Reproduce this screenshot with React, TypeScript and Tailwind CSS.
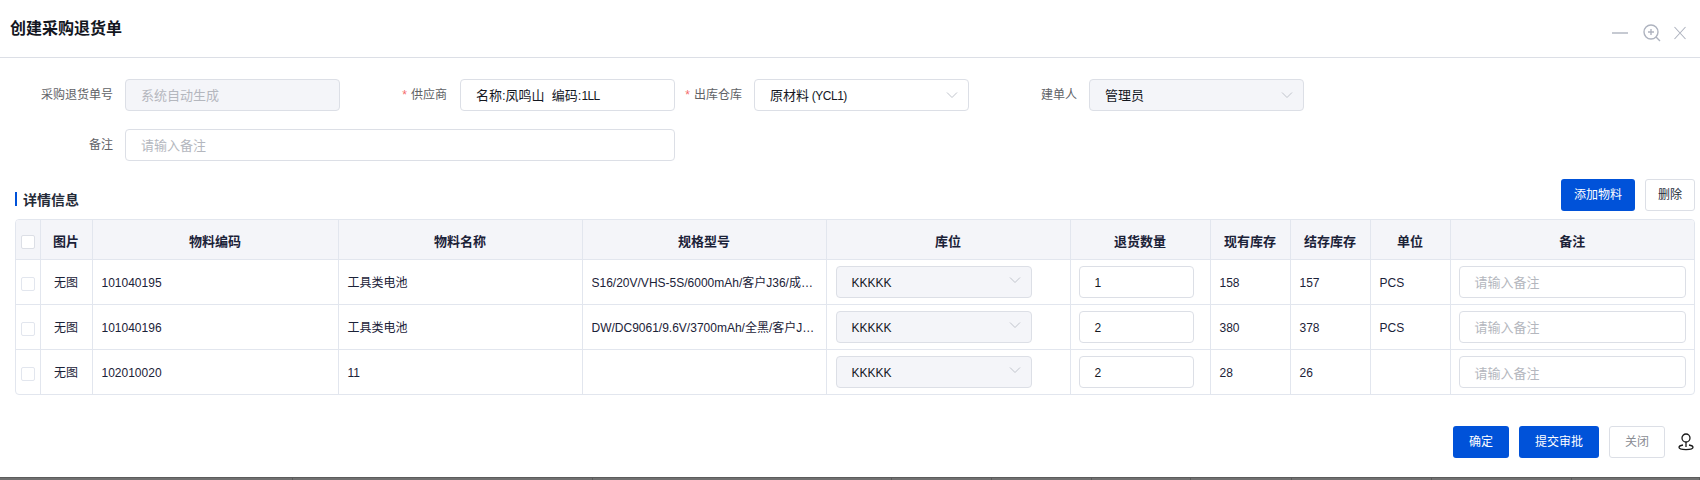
const F = { fontFamily: '"Liberation Sans", "Noto Sans CJK SC", sans-serif' };

function Chevron({ className = "" }: { className?: string }) {
  return (
    <svg width="12" height="8" viewBox="0 0 12 8" fill="none" stroke="#c0c4cc" strokeWidth="1" className={className}>
      <path d="M1 1.5 L6 6.5 L11 1.5" />
    </svg>
  );
}

function Field({ label, req, labelW, gap = "mr-3", children }: { label: string; req?: boolean; labelW: string; gap?: string; children: React.ReactNode }) {
  return (
    <div className="flex items-center">
      <div className={`${labelW} ${gap} text-right text-[12px] text-[#606266] whitespace-nowrap`}>
        {req && <span className="text-[#f56c6c] mr-1">*</span>}
        {label}
      </div>
      {children}
    </div>
  );
}

function Box({ w, bg, children }: { w: string; bg?: boolean; children: React.ReactNode }) {
  return (
    <div className={`${w} h-8 flex items-center justify-between pl-[15px] pr-[10px] border border-[#dcdfe6] rounded-[4px] text-[13px] ${bg ? "bg-[#f4f5f9]" : "bg-white"}`}>
      {children}
    </div>
  );
}

const rows = [
  { code: "101040195", name: "工具类电池", spec: "S16/20V/VHS-5S/6000mAh/客户J36/成品电池组件", qty: "1", stock: "158", left: "157", unit: "PCS" },
  { code: "101040196", name: "工具类电池", spec: "DW/DC9061/9.6V/3700mAh/全黑/客户J36/成品电池", qty: "2", stock: "380", left: "378", unit: "PCS" },
  { code: "102010020", name: "11", spec: "", qty: "2", stock: "28", left: "26", unit: "" },
];

const heads = ["图片", "物料编码", "物料名称", "规格型号", "库位", "退货数量", "现有库存", "结存库存", "单位", "备注"];
const td = "border-r border-[#e2e6ee] last:border-r-0 px-[9px] overflow-hidden";
const stripWidths = [293, 300, 299, 100, 100, 99, 101, 140, 140, 128];

export default function App() {
  return (
    <div style={F} className="w-[1700px] h-[480px] bg-white flex flex-col text-[12px] text-[#1b2238] overflow-hidden">
      <div className="h-[58px] shrink-0 border-b border-[#dcdfe6] flex items-center justify-between pl-[10px] pr-[14px]">
        <div className="text-[16px] font-semibold text-[#14171f] leading-none pt-[1px]">创建采购退货单</div>
        <div className="flex items-center pt-[8px]">
          <svg width="16" height="18" viewBox="0 0 16 18" fill="none" stroke="#aeb3bf" strokeWidth="1.4"><path d="M0 9H16" /></svg>
          <svg width="18" height="18" viewBox="0 0 18 18" fill="none" stroke="#aeb3bf" strokeWidth="1.4" className="ml-[15px]">
            <circle cx="8" cy="8" r="7" />
            <path d="M8 5V11M5 8H11M13 13L17 17" />
          </svg>
          <svg width="12" height="14" viewBox="0 0 12 14" fill="none" stroke="#aeb3bf" strokeWidth="1.1" className="ml-[13px]"><path d="M0.5 1L11.5 13M11.5 1L0.5 13" /></svg>
        </div>
      </div>

      <div className="pl-[15px] pt-[21px] flex flex-col gap-[18px]">
        <div className="flex">
          <Field label="采购退货单号" labelW="w-[98px]">
            <Box w="w-[215px]" bg><span className="text-[#b4b7be] pt-[2px]">系统自动生成</span></Box>
          </Field>
          <Field label="供应商" req labelW="w-[107px]" gap="mr-[13px]">
            <Box w="w-[215px]">
              <span className="text-[#14171f] whitespace-pre pt-[2px]">名称:凤鸣山  编码:<span className="text-[12px] tracking-[-0.7px]">1LL</span></span>
            </Box>
          </Field>
          <Field label="出库仓库" req labelW="w-[67px]">
            <Box w="w-[215px]">
              <span className="text-[#14171f] whitespace-pre pt-[2px]">原材料<span className="text-[12px] tracking-[-0.5px]"> (YCL1)</span></span>
              <Chevron />
            </Box>
          </Field>
          <Field label="建单人" labelW="w-[108px]">
            <Box w="w-[215px]" bg><span className="text-[#14171f] pt-[2px]">管理员</span><Chevron /></Box>
          </Field>
        </div>
        <Field label="备注" labelW="w-[98px]">
          <Box w="w-[550px]"><span className="text-[#b4b7be] pt-[2px]">请输入备注</span></Box>
        </Field>
      </div>

      <div className="flex items-center justify-between pl-[15px] pr-[5px] mt-[18px] h-8">
        <div className="mt-[8px] border-l-2 border-[#0052d9] pl-[6px] pt-[2px] h-[14px] flex items-center text-[14px] font-semibold text-[#252b38] leading-none">详情信息</div>
        <div className="flex gap-[10px]">
          <button className="w-[74px] h-8 bg-[#0052d9] rounded-[3px] text-white text-[12px]">添加物料</button>
          <button className="w-[50px] h-8 bg-white border border-[#dcdfe6] rounded-[3px] text-[#252b38] text-[12px]">删除</button>
        </div>
      </div>

      <div className="ml-[15px] mr-[5px] mt-2 border border-[#e2e6ee] rounded-[4px] overflow-hidden w-[1680px]">
        <table className="table-fixed border-collapse w-full">
          <colgroup>
            <col className="w-[24px]" /><col className="w-[52px]" /><col className="w-[246px]" /><col className="w-[244px]" /><col className="w-[244px]" /><col className="w-[244px]" /><col className="w-[140px]" /><col className="w-[80px]" /><col className="w-[80px]" /><col className="w-[80px]" /><col />
          </colgroup>
          <thead>
            <tr className="h-[39px] bg-[#f4f5f9] border-b border-[#e2e6ee]">
              <th className={`${td} !px-[5px] pt-[5px]`}><div className="w-[14px] h-[14px] bg-white border border-[#dcdfe6] rounded-[2px]" /></th>
              {heads.map((h) => (
                <th key={h} className={`${td} text-[13px] font-semibold text-[#1b2238] text-center whitespace-nowrap !px-0 pt-[4px]`}>{h}</th>
              ))}
            </tr>
          </thead>
          <tbody>
            {rows.map((r, i) => (
              <tr key={i} className="h-[45px] border-b border-[#e2e6ee] last:border-b-0">
                <td className={`${td} !px-[5px] pt-[5px]`}><div className="w-[14px] h-[14px] bg-white border border-[#e2e6ee] rounded-[2px]" /></td>
                <td className={`${td} text-center !px-0 pt-[3px]`}>无图</td>
                <td className={`${td} pt-[3px]`}>{r.code}</td>
                <td className={`${td} pt-[3px]`}>{r.name}</td>
                <td className={`${td} pt-[3px]`}><div className="truncate">{r.spec}</div></td>
                <td className={td}>
                  <div className="w-[196px] h-8 bg-[#f4f5f9] border border-[#dcdfe6] rounded-[4px] flex items-center justify-between pl-[15px] pr-[10px] text-[#14171f]">
                    <span className="pt-[3px]">KKKKK</span><Chevron className="-mt-1" />
                  </div>
                </td>
                <td className={`${td} !px-[8px]`}>
                  <div className="w-[115px] h-8 bg-white border border-[#dcdfe6] rounded-[4px] flex items-center pl-[15px] text-[#14171f]"><span className="pt-[3px]">{r.qty}</span></div>
                </td>
                <td className={`${td} pt-[3px]`}>{r.stock}</td>
                <td className={`${td} pt-[3px]`}>{r.left}</td>
                <td className={`${td} pt-[3px]`}>{r.unit}</td>
                <td className={`${td} !px-[8px]`}>
                  <div className="w-[227px] h-8 bg-white border border-[#dcdfe6] rounded-[4px] flex items-center pl-[15px] text-[13px] text-[#b4b7be]"><span className="pt-[3px]">请输入备注</span></div>
                </td>
              </tr>
            ))}
          </tbody>
        </table>
      </div>

      <div className="flex items-center justify-end gap-[10px] pr-[6px] mt-[31px]">
        <button className="w-[56px] h-8 bg-[#0052d9] rounded-[3px] text-white text-[12px]">确定</button>
        <button className="w-[80px] h-8 bg-[#0052d9] rounded-[3px] text-white text-[12px]">提交审批</button>
        <button className="w-[56px] h-8 bg-white border border-[#dcdfe6] rounded-[3px] text-[#8a8d94] text-[12px]">关闭</button>
        <svg width="16" height="18" viewBox="0 0 16 18" fill="none" stroke="#1a1a1a" strokeWidth="1.3" className="ml-[3px]">
          <circle cx="8" cy="5" r="4" />
          <path d="M8 9V14" />
          <path d="M5 12C2.5 12.4 1 13.2 1 14.3C1 15.7 4 16.6 8 16.6C12 16.6 15 15.7 15 14.3C15 13.2 13.5 12.4 11 12" />
        </svg>
      </div>

      <div className="mt-auto h-[3px] bg-[#707070] border-t border-[#5c5c5c] shrink-0 flex">
        {stripWidths.map((w, i) => (
          <div key={i} style={{ width: w }} className="h-full border-r border-[#5c5c5c]" />
        ))}
      </div>
    </div>
  );
}
